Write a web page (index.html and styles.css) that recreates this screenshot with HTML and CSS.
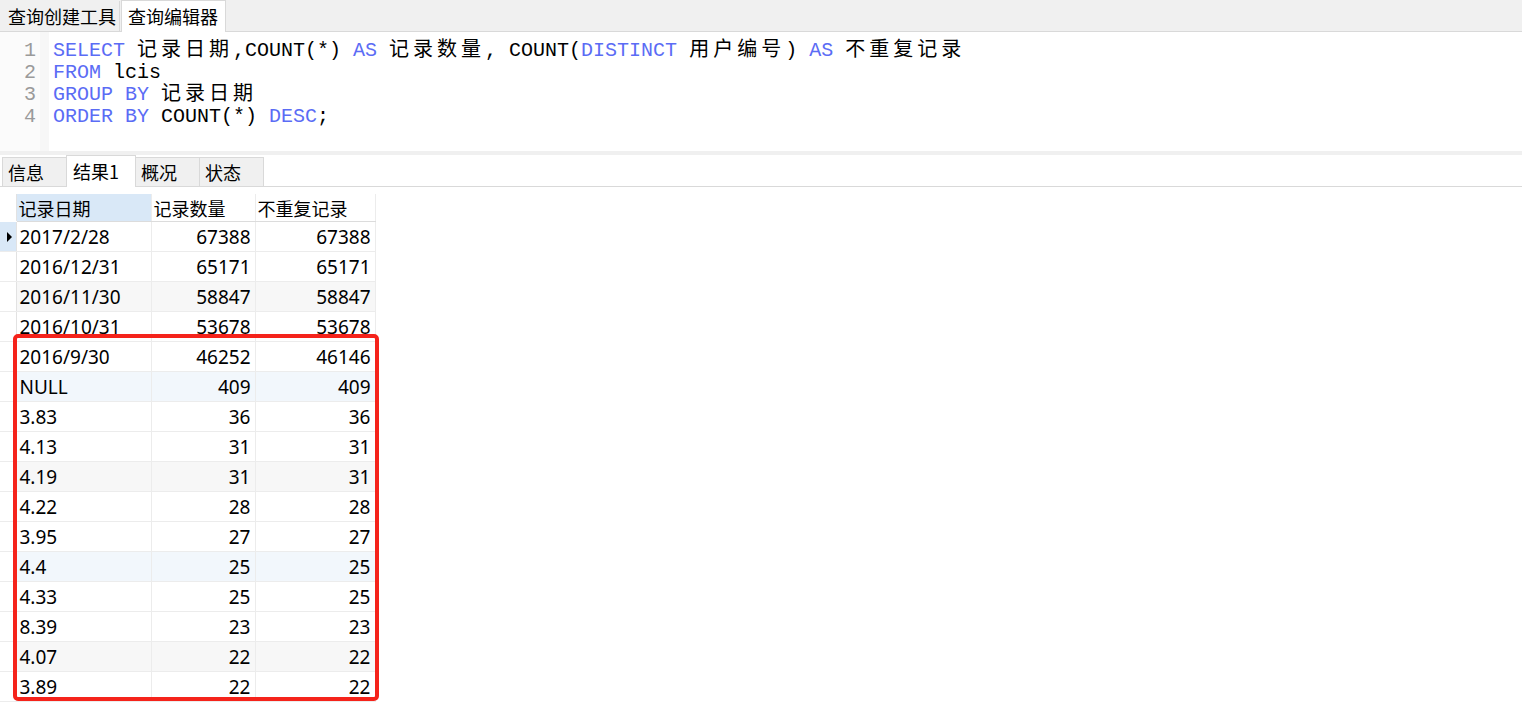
FILE: index.html
```html
<!DOCTYPE html>
<html lang="zh-CN">
<head>
    <meta charset="UTF-8">
    <title>查询编辑器</title>
    <link rel="stylesheet" href="styles.css">
</head>
<body>

<div class="top-tabs">
    <div class="tab">查询创建工具</div>
    <div class="tab active">查询编辑器</div>
</div>

<div class="editor">
    <div class="gutter">
        <div>1</div>
        <div>2</div>
        <div>3</div>
        <div>4</div>
    </div>
    <div class="code">
        <div class="line"><span class="kw">SELECT</span> <span class="cn">记录日期</span>,COUNT(*) <span class="kw">AS</span> <span class="cn">记录数量</span>, COUNT(<span class="kw">DISTINCT</span> <span class="cn">用户编号</span>) <span class="kw">AS</span> <span class="cn">不重复记录</span></div>
        <div class="line"><span class="kw">FROM</span> lcis</div>
        <div class="line"><span class="kw">GROUP BY</span> <span class="cn">记录日期</span></div>
        <div class="line"><span class="kw">ORDER BY</span> COUNT(*) <span class="kw">DESC</span>;</div>
    </div>
</div>

<div class="splitter"></div>

<div class="result-tabs">
    <div class="rtab">信息</div>
    <div class="rtab active">结果1</div>
    <div class="rtab">概况</div>
    <div class="rtab">状态</div>
</div>

<div class="grid-wrap">
    <table class="grid">
        <colgroup>
            <col class="c-ind">
            <col class="c-date">
            <col class="c-num">
            <col class="c-num2">
        </colgroup>
        <thead>
            <tr>
                <th class="ind"></th>
                <th class="sel">记录日期</th>
                <th>记录数量</th>
                <th>不重复记录</th>
            </tr>
        </thead>
        <tbody>
            <tr><td class="ind current"><span class="arrow"></span></td><td>2017/2/28</td><td class="n">67388</td><td class="n">67388</td></tr>
            <tr><td class="ind"></td><td>2016/12/31</td><td class="n">65171</td><td class="n">65171</td></tr>
            <tr class="grey"><td class="ind"></td><td>2016/11/30</td><td class="n">58847</td><td class="n">58847</td></tr>
            <tr><td class="ind"></td><td>2016/10/31</td><td class="n">53678</td><td class="n">53678</td></tr>
            <tr><td class="ind"></td><td>2016/9/30</td><td class="n">46252</td><td class="n">46146</td></tr>
            <tr class="blue"><td class="ind"></td><td>NULL</td><td class="n">409</td><td class="n">409</td></tr>
            <tr><td class="ind"></td><td>3.83</td><td class="n">36</td><td class="n">36</td></tr>
            <tr><td class="ind"></td><td>4.13</td><td class="n">31</td><td class="n">31</td></tr>
            <tr class="grey"><td class="ind"></td><td>4.19</td><td class="n">31</td><td class="n">31</td></tr>
            <tr><td class="ind"></td><td>4.22</td><td class="n">28</td><td class="n">28</td></tr>
            <tr><td class="ind"></td><td>3.95</td><td class="n">27</td><td class="n">27</td></tr>
            <tr class="blue"><td class="ind"></td><td>4.4</td><td class="n">25</td><td class="n">25</td></tr>
            <tr><td class="ind"></td><td>4.33</td><td class="n">25</td><td class="n">25</td></tr>
            <tr><td class="ind"></td><td>8.39</td><td class="n">23</td><td class="n">23</td></tr>
            <tr class="grey"><td class="ind"></td><td>4.07</td><td class="n">22</td><td class="n">22</td></tr>
            <tr><td class="ind"></td><td>3.89</td><td class="n">22</td><td class="n">22</td></tr>
        </tbody>
    </table>
    <div class="highlight"></div>
</div>

</body>
</html>
```

FILE: styles.css
```css
body {
    margin: 0;
    padding: 0;
    background: #fff;
    color: #000;
    font-family: "Noto Sans", "Noto Sans CJK SC", sans-serif;
    overflow: hidden;
}

/* Top tab strip */
.top-tabs {
    display: flex;
    align-items: flex-end;
    height: 31px;
    background: #f0f0f0;
    border-bottom: 1px solid #d9d9d9;
}

.tab {
    height: 30px;
    line-height: 30px;
    padding: 0 3px 0 8px;
    font-family: "Noto Sans CJK SC", sans-serif;
    font-size: 18px;
    border-right: 1px solid #d9d9d9;
    box-sizing: border-box;
    white-space: nowrap;
}

.tab.active {
    width: 105px;
    height: 32px;
    margin-bottom: -1px;
    padding: 0 6px;
    background: #fff;
    border: 1px solid #d9d9d9;
    border-bottom: none;
    margin-left: 1px;
}

/* SQL editor */
.editor {
    display: flex;
    height: 119px;
    overflow: hidden;
    font-family: "Liberation Mono", "Noto Sans CJK SC", monospace;
    font-size: 20px;
    line-height: 22px;
}

.gutter {
    width: 49px;
    padding-top: 8px;
    padding-right: 4px;
    box-sizing: border-box;
    text-align: right;
    color: #9a9a9a;
    background: #fbfbfb;
    border-right: 9px solid #f7f7f7;
}

.gutter div {
    height: 22px;
}

.code {
    padding-top: 8px;
    padding-left: 4px;
}

.line {
    height: 22px;
    white-space: pre;
}

.kw {
    color: #5b6cf5;
}

.cn {
    letter-spacing: 4px;
}

.splitter {
    height: 4px;
    background: #f0f0f0;
}

/* Result tabs */
.result-tabs {
    display: flex;
    align-items: flex-end;
    height: 31px;
    padding-left: 2px;
    border-bottom: 1px solid #d9d9d9;
}

.rtab {
    width: 65px;
    height: 29px;
    line-height: 29px;
    box-sizing: border-box;
    padding: 0 5px;
    font-family: "Noto Sans CJK SC", sans-serif;
    font-size: 18px;
    background: #f0f0f0;
    border: 1px solid #d9d9d9;
    border-bottom: none;
    margin-right: -1px;
}

.rtab.active {
    width: 70px;
    height: 32px;
    line-height: 30px;
    padding: 0 6px;
    background: #fff;
    margin-bottom: -1px;
    position: relative;
    z-index: 1;
}

/* Data grid */
.grid-wrap {
    position: relative;
    padding-top: 7px;
}

.grid {
    border-collapse: collapse;
    table-layout: fixed;
    font-size: 19px;
}

.c-ind  { width: 16px; }
.c-date { width: 135px; }
.c-num  { width: 104px; }
.c-num2 { width: 120px; }

.grid th,
.grid td {
    padding: 0 3px;
    border-right: 1px solid #ececec;
    border-bottom: 1px solid #ececec;
    white-space: nowrap;
    overflow: hidden;
    font-weight: normal;
    text-align: left;
}

.grid th {
    height: 27px;
    padding-left: 2px;
    font-family: "Noto Sans CJK SC", sans-serif;
    font-size: 18px;
    border-bottom-color: #dcdcdc;
}

.grid td {
    height: 29px;
}

.grid th.sel {
    background: #d9e8f7;
}

.grid .ind {
    padding: 0;
    border-right-color: #e2e2e2;
    background: #fff;
}

.grid th.ind {
    border-bottom-color: #fff;
}

.grid td.current {
    background: #d9e8f7;
}

.arrow {
    display: block;
    width: 0;
    height: 0;
    margin-left: 7px;
    border-top: 5px solid transparent;
    border-bottom: 5px solid transparent;
    border-left: 5px solid #000;
}

.grid td.n {
    text-align: right;
    padding-right: 4px;
}

.grid tr.grey td {
    background: #f7f7f7;
}

.grid tr.blue td {
    background: #f2f7fc;
}

.grid tr.grey td.ind,
.grid tr.blue td.ind {
    background: #fff;
}

/* Red annotation box drawn over the grid */
.highlight {
    position: absolute;
    left: 13px;
    top: 147px;
    width: 366px;
    height: 367px;
    box-sizing: border-box;
    border: 4px solid #f5231b;
    border-radius: 5px;
    pointer-events: none;
}
```
